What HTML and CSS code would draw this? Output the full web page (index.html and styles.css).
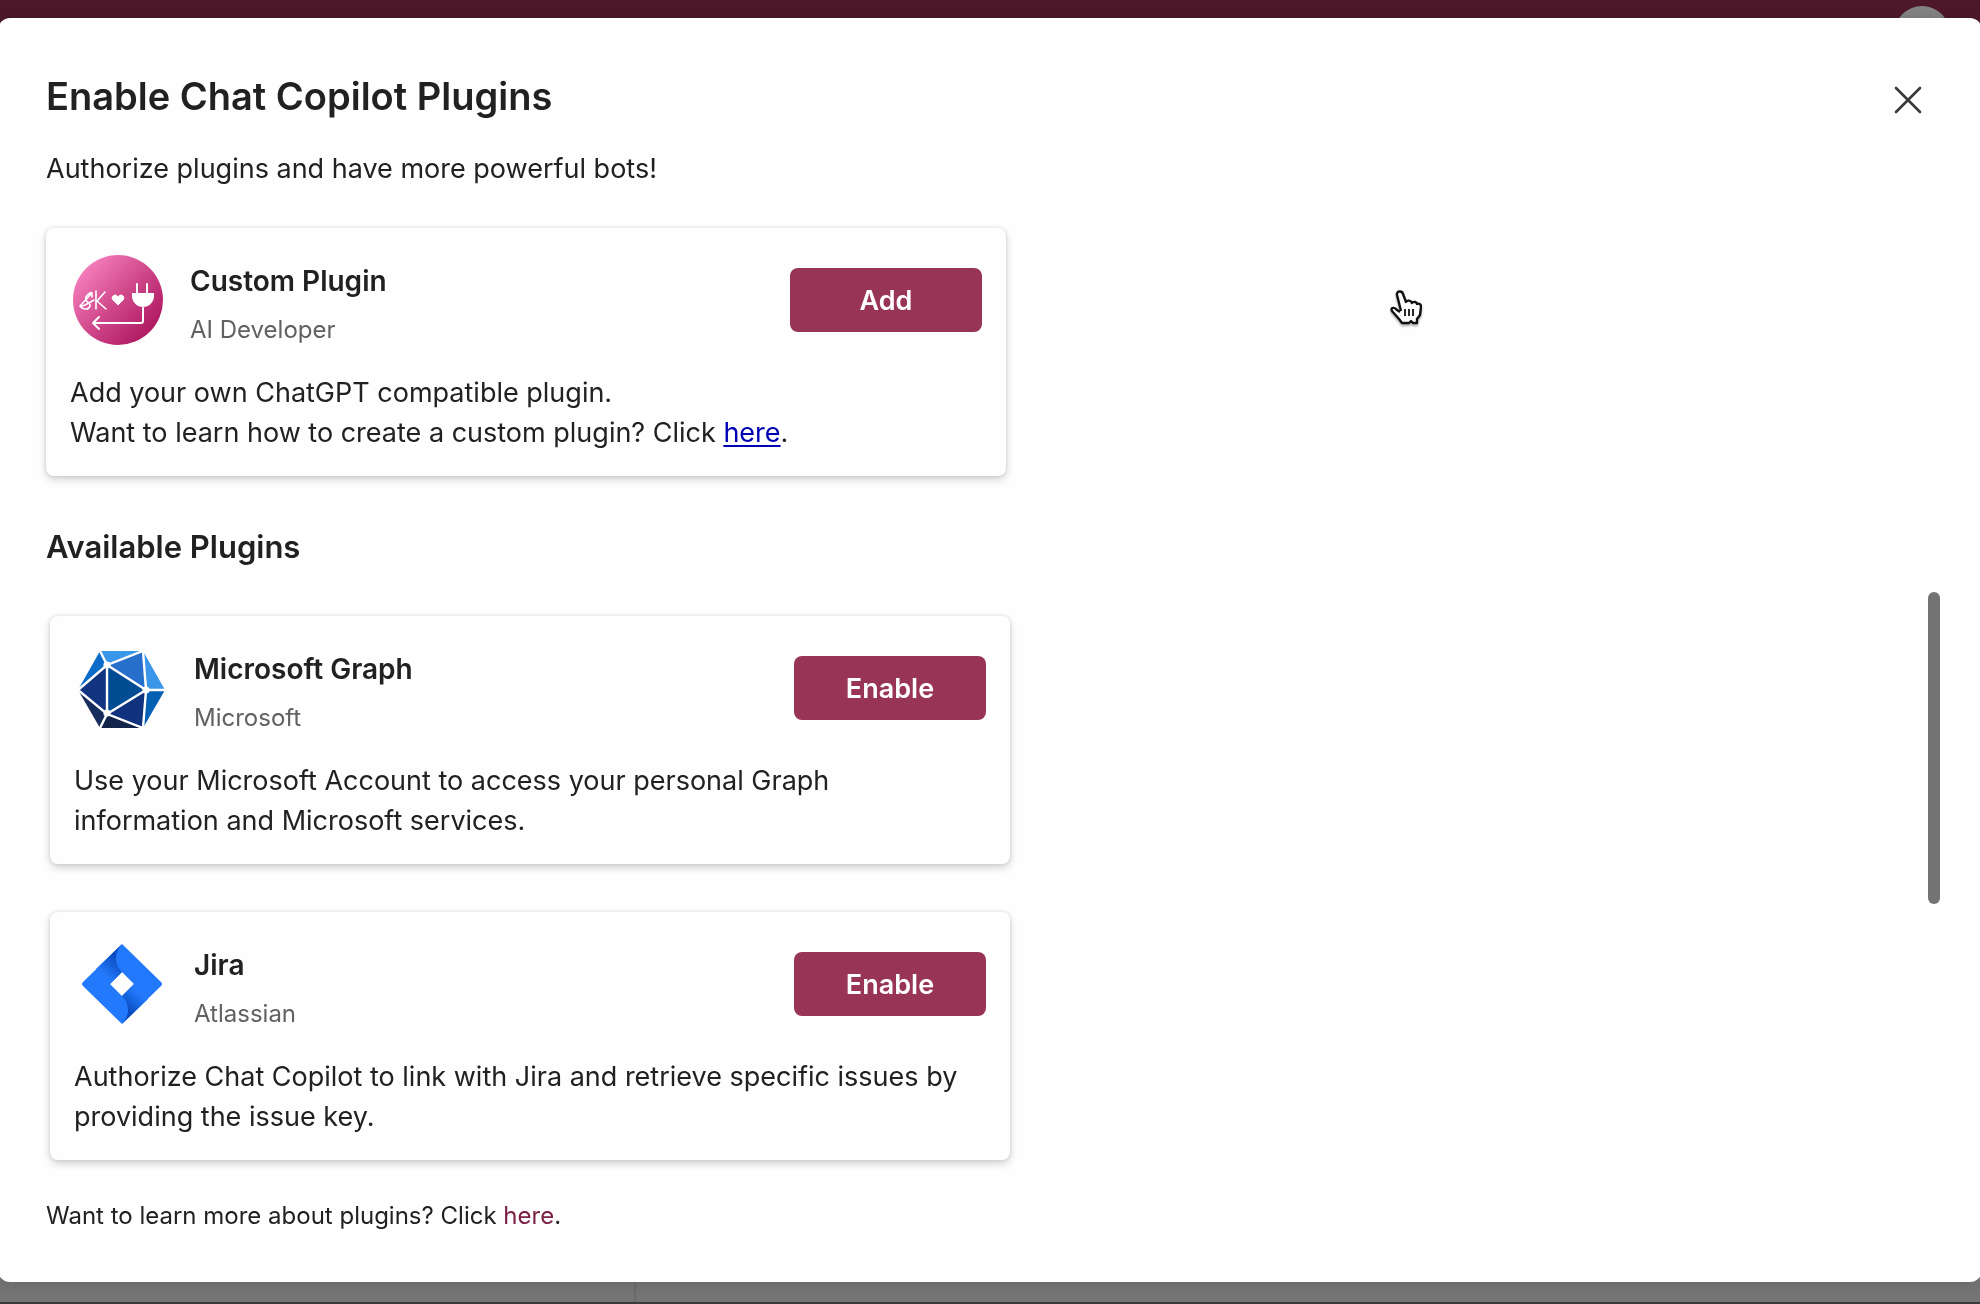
FILE: index.html
```html
<!DOCTYPE html>
<html lang="en">
<head>
<meta charset="utf-8">
<title>Chat Copilot</title>
<link rel="stylesheet" href="styles.css">
</head>
<body>
<div class="backdrop" aria-hidden="true">
  <div class="app-bar"><span class="persona"></span></div>
  <div class="panes"><div class="pane-list"></div><div class="pane-chat"></div></div>
</div>
<main class="dialog" role="dialog" aria-labelledby="dialog-title">
  <header class="dialog-head">
    <h1 id="dialog-title">Enable Chat Copilot Plugins</h1>
    <button class="close" type="button" aria-label="Close">
      <svg viewBox="0 0 28 28" width="28" height="28"><path d="M2 2l24 24M26 2L2 26" fill="none" stroke="#3b3a39" stroke-width="2.6" stroke-linecap="round"/></svg>
    </button>
  </header>
  <p class="intro">Authorize plugins and have more powerful bots!</p>

  <article class="card">
    <div class="card-head">
      <svg class="logo" viewBox="0 0 96 96">
        <defs><linearGradient id="pink" x1="0.1" y1="0.15" x2="0.85" y2="0.85"><stop offset="0" stop-color="#f57fbd"/><stop offset="0.5" stop-color="#d14a8c"/><stop offset="1" stop-color="#b01a63"/></linearGradient></defs>
        <circle cx="48" cy="48" r="45" fill="url(#pink)"/>
        <g fill="none" stroke="#fff" stroke-width="1.6" stroke-linecap="round" stroke-linejoin="round">
          <path d="M22 45c0-4 0-5-2-4-3 2-5 5-4 7 1 3 5 3 4 6-1 4-7 4-10 0 4 1 8-3 14-6M10 54L22 41"/>
          <path d="M26 39v18M35 40l-8 9 9 8"/>
          <path d="M67 32v9M77 32v9M73 56v13q0 2-2 2H23M29 65l-6 6 6 6" stroke-width="2"/>
        </g>
        <path d="M62 41h22v3a11 11 0 0 1-22 0z" fill="#fff"/>
        <path d="M48 53l-5-5c-3-4 3-7 5-3 2-4 8-1 5 3z" fill="#fff" stroke="#fff" stroke-width="1"/>
      </svg>
      <div class="names"><h2>Custom Plugin</h2><p class="publisher">AI Developer</p></div>
      <button class="action" type="button">Add</button>
    </div>
    <p class="about">Add your own ChatGPT compatible plugin.<br>Want to learn how to create a custom plugin? Click <a href="#custom">here</a>.</p>
  </article>

  <h2 class="section-title">Available Plugins</h2>
  <div class="card-list">
    <article class="card">
      <div class="card-head">
        <svg class="logo" viewBox="0 0 96 96">
          <path d="M26 11h43L33 25z" fill="#3a96e8"/>
          <path d="M26 11L4 50l29-25z" fill="#0a6cc8"/>
          <path d="M69 11L33 25l40 25z" fill="#2670cc"/>
          <path d="M69 11l22 39H73z" fill="#3a96e8"/>
          <path d="M91 50L69 88l4-38z" fill="#0560b4"/>
          <path d="M33 25L4 50l29 24z" fill="#12337f"/>
          <path d="M33 25l40 25-40 24z" fill="#024c94"/>
          <path d="M73 50L33 74l36 14z" fill="#10327f"/>
          <path d="M4 50l22 38 7-14z" fill="#172d5c"/>
          <path d="M26 88h43L33 74z" fill="#13244a"/>
          <g fill="none" stroke="#fff" stroke-width="2.4"><path d="M26 11l7 14L69 11l3 39-3 38-36-14-7 14M33 25v49L4 50l29-25 39 25-39 24M72 50h19"/></g>
          <g fill="#fff"><circle cx="33" cy="25" r="3.6"/><circle cx="72" cy="50" r="3.6"/><circle cx="33" cy="73" r="3.6"/></g>
        </svg>
        <div class="names"><h2>Microsoft Graph</h2><p class="publisher">Microsoft</p></div>
        <button class="action" type="button">Enable</button>
      </div>
      <p class="about">Use your Microsoft Account to access your personal Graph information and Microsoft services.</p>
    </article>
    <article class="card">
      <div class="card-head">
        <svg class="logo" viewBox="0 0 96 96">
          <defs>
            <linearGradient id="jira-a" x1="46" y1="19" x2="29" y2="37" gradientUnits="userSpaceOnUse"><stop offset="0.15" stop-color="#0a4cc0"/><stop offset="1" stop-color="#2379fb"/></linearGradient>
            <linearGradient id="jira-b" x1="51" y1="77" x2="67" y2="60" gradientUnits="userSpaceOnUse"><stop offset="0.15" stop-color="#0a4cc0"/><stop offset="1" stop-color="#2379fb"/></linearGradient>
          </defs>
          <path d="M48 8l39 38q2 2 0 4L48 88 9 50q-2-2 0-4zM48 36L36 48l12 12 12-12z" fill="#2379fb" fill-rule="evenodd"/>
          <path d="M48 8L22 33l14 15 12-12C41 29 39 18 48 8z" fill="url(#jira-a)"/>
          <path d="M48 88l26-25-14-15-12 12c7 7 9 18 0 28z" fill="url(#jira-b)"/>
        </svg>
        <div class="names"><h2>Jira</h2><p class="publisher">Atlassian</p></div>
        <button class="action" type="button">Enable</button>
      </div>
      <p class="about">Authorize Chat Copilot to link with Jira and retrieve specific issues by providing the issue key.</p>
    </article>
  </div>
  <p class="footnote">Want to learn more about plugins? Click <a href="#plugins">here</a>.</p>
  <span class="scroll-thumb"></span>
</main>
<svg class="pointer" viewBox="0 0 32 36" width="32" height="36" aria-hidden="true">
  <path d="M11 21L7 5c-1-4 5-5 6-1l3 8c1-2 5-2 6 1 1-2 5-1 5 1 2-1 4 0 4 3l-1 8-3 4v4h-4l-2-2-2 2h-7l-3-4-7-8c-2-4 3-4 5-1l3 2" fill="#fff" stroke="#111" stroke-width="2.4" stroke-linejoin="round"/>
  <path d="M15 19v7M19 19v7M23 19v7" stroke="#111" stroke-width="1.8"/>
</svg>
</body>
</html>
```

FILE: styles.css
```css
* { box-sizing: border-box; }
body {
  margin: 0;
  min-height: 100vh;
  display: flex;
  flex-direction: column;
  padding: 18px 0 22px;
  color: #212121;
  font: 400 27px/40px Inter, "Liberation Sans", sans-serif;
}
h1, h2, p { margin: 0; }

.backdrop {
  position: fixed;
  inset: 0;
  z-index: -1;
  display: flex;
  flex-direction: column;
}
.app-bar {
  height: 96px;
  padding: 6px 30px 0;
  display: flex;
  justify-content: flex-end;
  background: #4e182b;
}
.persona { width: 56px; height: 56px; border-radius: 50%; background: #858585; }
.panes { flex: 1; display: flex; background: #757575; border-bottom: 2px solid #3c3a3b; }
.pane-list { width: 636px; border-right: 2px solid #6b6b6b; }

.dialog {
  position: relative;
  flex: 1;
  margin: 0 -2px;
  padding: 50px 48px;
  background: #fefefe;
  border-radius: 12px;
  box-shadow: 0 0 16px rgba(0, 0, 0, 0.16);
}
.dialog-head {
  display: flex;
  justify-content: space-between;
  align-items: center;
  padding-right: 2px;
}
h1 { font-size: 38px; line-height: 56px; font-weight: 600; }
.close {
  display: flex;
  padding: 10px;
  margin-top: 8px;
  border: 0;
  background: none;
}
.intro { margin-top: 25px; }

.card {
  max-width: 960px;
  padding: 24px;
  background: #fefefe;
  border-radius: 8px;
  box-shadow: 0 0 4px rgba(0, 0, 0, 0.12), 0 4px 8px rgba(0, 0, 0, 0.16);
}
.intro + .card { margin-top: 39px; }
.card-head { display: flex; align-items: center; gap: 24px; }
.logo { flex: none; width: 96px; height: 96px; }
.names { flex: 1; display: flex; flex-direction: column; gap: 13px; padding-top: 7px; }
.names h2 { font-size: 28px; line-height: 40px; font-weight: 600; }
.publisher { font-size: 24px; line-height: 32px; color: #616161; }
.action {
  width: 192px;
  height: 64px;
  padding: 2px 0 0;
  border: 0;
  border-radius: 8px;
  background: #983556;
  color: #fff;
  font: 600 27px/40px Inter, "Liberation Sans", sans-serif;
}
.about { margin: 25px 0 -1px; padding-right: 16px; }
.about a { color: #0000b4; text-underline-offset: 3px; text-decoration-thickness: 2px; }

.section-title { margin-top: 49px; font-size: 31px; line-height: 44px; font-weight: 600; }
.card-list { display: flex; flex-direction: column; gap: 48px; margin: 47px 0 0 4px; }
.footnote { margin-top: 40px; font-size: 24px; line-height: 32px; }
.footnote a { color: #7b2045; text-decoration: none; }

.scroll-thumb {
  position: absolute;
  top: 574px;
  right: 42px;
  width: 12px;
  height: 312px;
  border-radius: 6px;
  background: #737373;
}
.pointer {
  position: absolute;
  left: 1390px;
  top: 290px;
  filter: drop-shadow(0 2px 1px rgba(0, 0, 0, 0.3));
}
```
